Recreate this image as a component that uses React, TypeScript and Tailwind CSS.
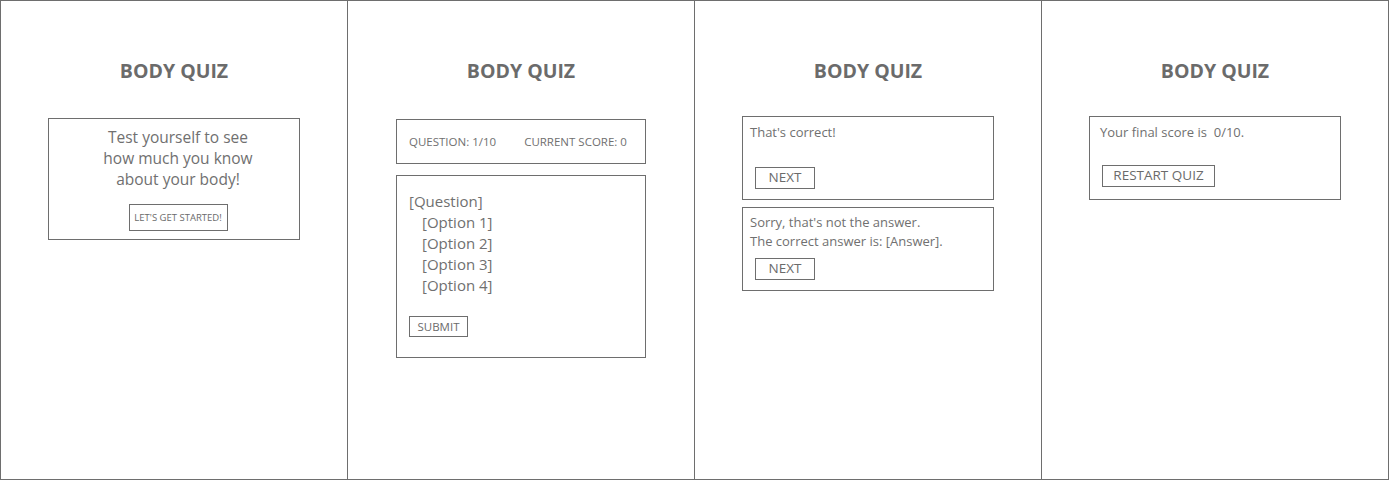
const font = { fontFamily: '"Open Sans", "Noto Sans", sans-serif' };

function Title() {
  return (
    <h1 className="text-center text-[19.5px] font-bold leading-[26px] text-[#6b6b6b] pt-[57px]">
      BODY QUIZ
    </h1>
  );
}

function Btn({ children, className }: { children: React.ReactNode; className: string }) {
  return (
    <button className={`border border-[#6e6e6e] text-[#6b6b6b] uppercase leading-none flex items-center justify-center ${className}`}>
      {children}
    </button>
  );
}

export default function App() {
  return (
    <div className="bg-white w-[1391px] h-[481px]" style={font}>
      <div className="w-[1389px] h-[480px] border border-[#6e6e6e] flex text-[#707070]">
        {/* Start */}
        <section className="w-[347px] border-r border-[#6e6e6e]">
          <Title />
          <div className="ml-[47px] mt-[34px] w-[252px] h-[122px] border border-[#6e6e6e] flex flex-col items-center pt-[8px] pl-[8px]">
            <p className="text-center text-[15.5px] leading-[21px]">
              Test yourself to see
              <br />
              how much you know
              <br />
              about your body!
            </p>
            <Btn className="mt-[14px] w-[99px] h-[27px] text-[9.5px]">LET'S GET STARTED!</Btn>
          </div>
        </section>

        {/* Question */}
        <section className="w-[347px] border-r border-[#6e6e6e]">
          <Title />
          <div className="ml-[48px] mt-[35px] w-[250px] h-[45px] border border-[#6e6e6e] flex items-center pl-[12px] pt-[1px] text-[11.5px]">
            <span>QUESTION: 1/10</span>
            <span className="ml-[28px]">CURRENT SCORE: 0</span>
          </div>
          <div className="ml-[48px] mt-[11px] w-[250px] h-[183px] border border-[#6e6e6e] pl-[12px] pt-[15px]">
            <div className="text-[15px] leading-[21px]">
              <p>[Question]</p>
              <ul className="pl-[13px]">
                <li>[Option 1]</li>
                <li>[Option 2]</li>
                <li>[Option 3]</li>
                <li>[Option 4]</li>
              </ul>
            </div>
            <Btn className="mt-[20px] w-[59px] h-[21px] text-[11.5px]">SUBMIT</Btn>
          </div>
        </section>

        {/* Feedback */}
        <section className="w-[347px] border-r border-[#6e6e6e]">
          <Title />
          <div className="ml-[47px] mt-[32px] w-[252px] h-[84px] border border-[#6e6e6e] pl-[7px] pt-[6px]">
            <p className="text-[13px] leading-[19px]">That's correct!</p>
            <Btn className="ml-[5px] mt-[25px] w-[60px] h-[22px] text-[13.5px]">NEXT</Btn>
          </div>
          <div className="ml-[47px] mt-[7px] w-[252px] h-[84px] border border-[#6e6e6e] pl-[7px] pt-[5px]">
            <p className="text-[13px] leading-[19px]">
              Sorry, that's not the answer.
              <br />
              The correct answer is: [Answer].
            </p>
            <Btn className="ml-[5px] mt-[7px] w-[60px] h-[22px] text-[13.5px]">NEXT</Btn>
          </div>
        </section>

        {/* Result */}
        <section className="w-[346px]">
          <Title />
          <div className="ml-[47px] mt-[32px] w-[252px] h-[84px] border border-[#6e6e6e] pl-[10px] pt-[6px]">
            <p className="text-[13px] leading-[19px] whitespace-pre">Your final score is  0/10.</p>
            <Btn className="ml-[2px] mt-[23px] w-[113px] h-[22px] text-[13.5px]">RESTART QUIZ</Btn>
          </div>
        </section>
      </div>
    </div>
  );
}
